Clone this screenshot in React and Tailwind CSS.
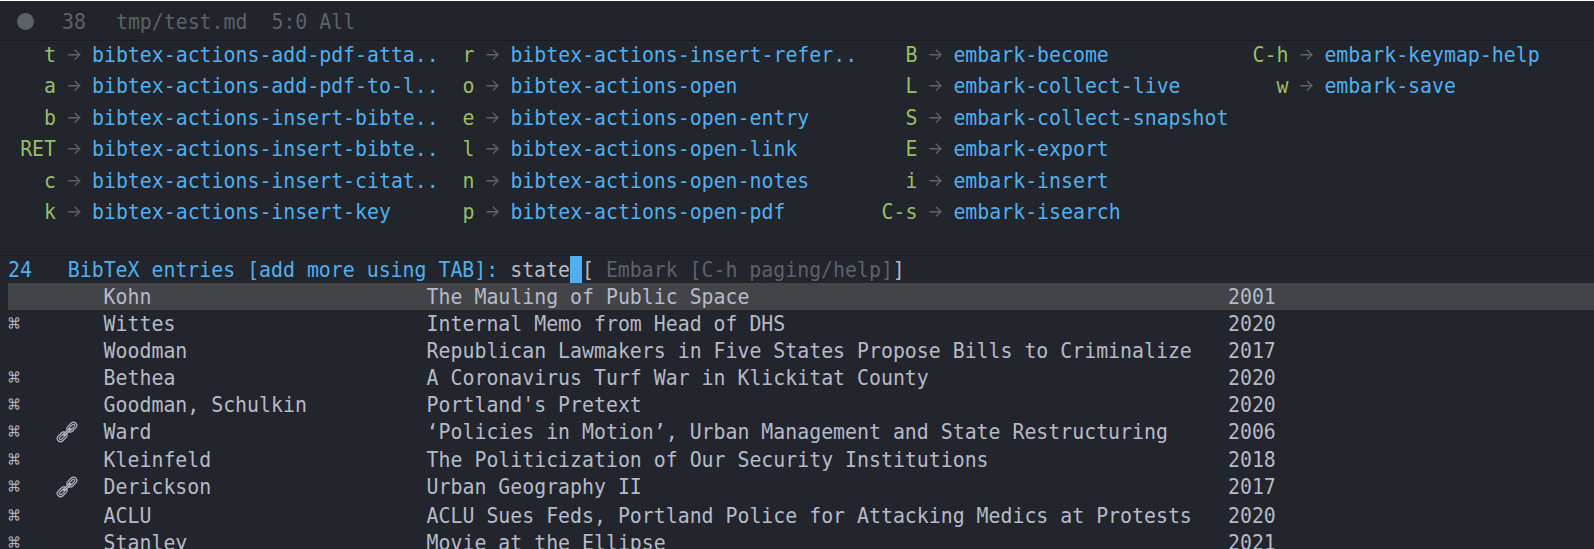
const KEYS = [
  { cls: "w-[418.4px]", keyCls: "w-[48px]", rows: [["t", "bibtex-actions-add-pdf-atta.."], ["a", "bibtex-actions-add-pdf-to-l.."], ["b", "bibtex-actions-insert-bibte.."], ["RET", "bibtex-actions-insert-bibte.."], ["c", "bibtex-actions-insert-citat.."], ["k", "bibtex-actions-insert-key"]] },
  { cls: "w-[419px]", keyCls: "w-[48px]", rows: [["r", "bibtex-actions-insert-refer.."], ["o", "bibtex-actions-open"], ["e", "bibtex-actions-open-entry"], ["l", "bibtex-actions-open-link"], ["n", "bibtex-actions-open-notes"], ["p", "bibtex-actions-open-pdf"]] },
  { cls: "w-[371px]", keyCls: "w-[72px]", rows: [["B", "embark-become"], ["L", "embark-collect-live"], ["S", "embark-collect-snapshot"], ["E", "embark-export"], ["i", "embark-insert"], ["C-s", "embark-isearch"]] },
  { cls: "w-[340px]", keyCls: "w-[72px]", rows: [["C-h", "embark-keymap-help"], ["w", "embark-save"]] },
];

const ENTRIES = [
  [0, 0, "Kohn", "The Mauling of Public Space", "2001"],
  [1, 0, "Wittes", "Internal Memo from Head of DHS", "2020"],
  [0, 0, "Woodman", "Republican Lawmakers in Five States Propose Bills to Criminalize", "2017"],
  [1, 0, "Bethea", "A Coronavirus Turf War in Klickitat County", "2020"],
  [1, 0, "Goodman, Schulkin", "Portland's Pretext", "2020"],
  [1, 1, "Ward", "‘Policies in Motion’, Urban Management and State Restructuring", "2006"],
  [1, 0, "Kleinfeld", "The Politicization of Our Security Institutions", "2018"],
  [1, 1, "Derickson", "Urban Geography II", "2017"],
  [1, 0, "ACLU", "ACLU Sues Feds, Portland Police for Attacking Medics at Protests", "2020"],
  [1, 0, "Stanley", "Movie at the Ellipse", "2021"],
];

function LinkIcon() {
  return (
    <svg viewBox="0 0 22 22" className="block h-[22px] w-[22px]" fill="none" stroke="#b5bac8" strokeWidth="1.15">
      <g transform="rotate(-45 11 11)">
        <rect x="-1.4" y="7.7" width="11" height="6.6" rx="3.3" />
        <rect x="0.7" y="9.7" width="6.8" height="2.6" rx="1.3" />
        <rect x="12.4" y="7.7" width="11" height="6.6" rx="3.3" />
        <rect x="14.5" y="9.7" width="6.8" height="2.6" rx="1.3" />
        <rect x="6.4" y="10" width="9.2" height="2" rx="1" />
      </g>
    </svg>
  );
}

// Terminal glyphs are taller than they are wide.
function T({ className = "", children }) {
  return <span className={`inline-block shrink-0 scale-y-[1.08] ${className}`}>{children}</span>;
}

function KeyColumn({ col }) {
  return (
    <div className={`${col.cls} shrink-0`}>
      {col.rows.map(([key, command]) => (
        <div key={key} className="flex h-[31.4px] items-start">
          <T className={`${col.keyCls} text-right text-[#98be65]`}>{key}</T>
          <span className="w-[36px] shrink-0 text-center font-['Inter'] text-[17px] text-[#5b6268]">→</span>
          <T className="text-[#51afef]">{command}</T>
        </div>
      ))}
    </div>
  );
}

export default function App() {
  return (
    <div className="flex h-[549px] w-[1594px] flex-col overflow-hidden whitespace-pre bg-[#22252c] font-['DejaVu_Sans_Mono',monospace] text-[19.87px] leading-[27px] text-[#b5bac8]">
      <header className="flex h-[41px] shrink-0 items-center border-t border-b border-t-white border-b-[#191b20] bg-[#21242b] pt-[2px] text-[#5b6268]">
        <span className="ml-[17px] h-[17px] w-[17px] rounded-full bg-[#5b6268]" />
        <T className="ml-[28px]">38</T>
        <T className="ml-[30px]">tmp/test.md</T>
        <T className="ml-[24px]">5:0 All</T>
      </header>
      <section className="flex h-[214px] shrink-0 pl-[8px]">
        {KEYS.map((col) => (
          <KeyColumn key={col.cls} col={col} />
        ))}
      </section>
      <section className="flex shrink-0 flex-col border-t border-[#191b20]">
        <div className="flex h-[27px] items-center pl-[8px]">
          <T className="text-[#51afef]">24   BibTeX entries [add more using TAB]: </T>
          <T>state</T>
          <span className="h-[27px] w-[12px] bg-[#51afef]" />
          <T>[<span className="text-[#5b6268]"> Embark [C-h paging/help]</span>]</T>
        </div>
        {ENTRIES.map(([file, link, author, title, year], i) => (
          <div key={author} className={`ml-[8px] flex shrink-0 items-start ${link ? "h-[28.3px]" : "h-[27px]"} ${i === 0 ? "bg-[#434448]" : ""}`}>
            <T className="w-[48px]">{file ? "⌘" : ""}</T>
            <span className="w-[47.6px] shrink-0 pt-[3px]">{link ? <LinkIcon /> : null}</span>
            <T className="w-[323px]">{author}</T>
            <T className="w-[801.4px]">{title}</T>
            <T>{year}</T>
          </div>
        ))}
      </section>
    </div>
  );
}
